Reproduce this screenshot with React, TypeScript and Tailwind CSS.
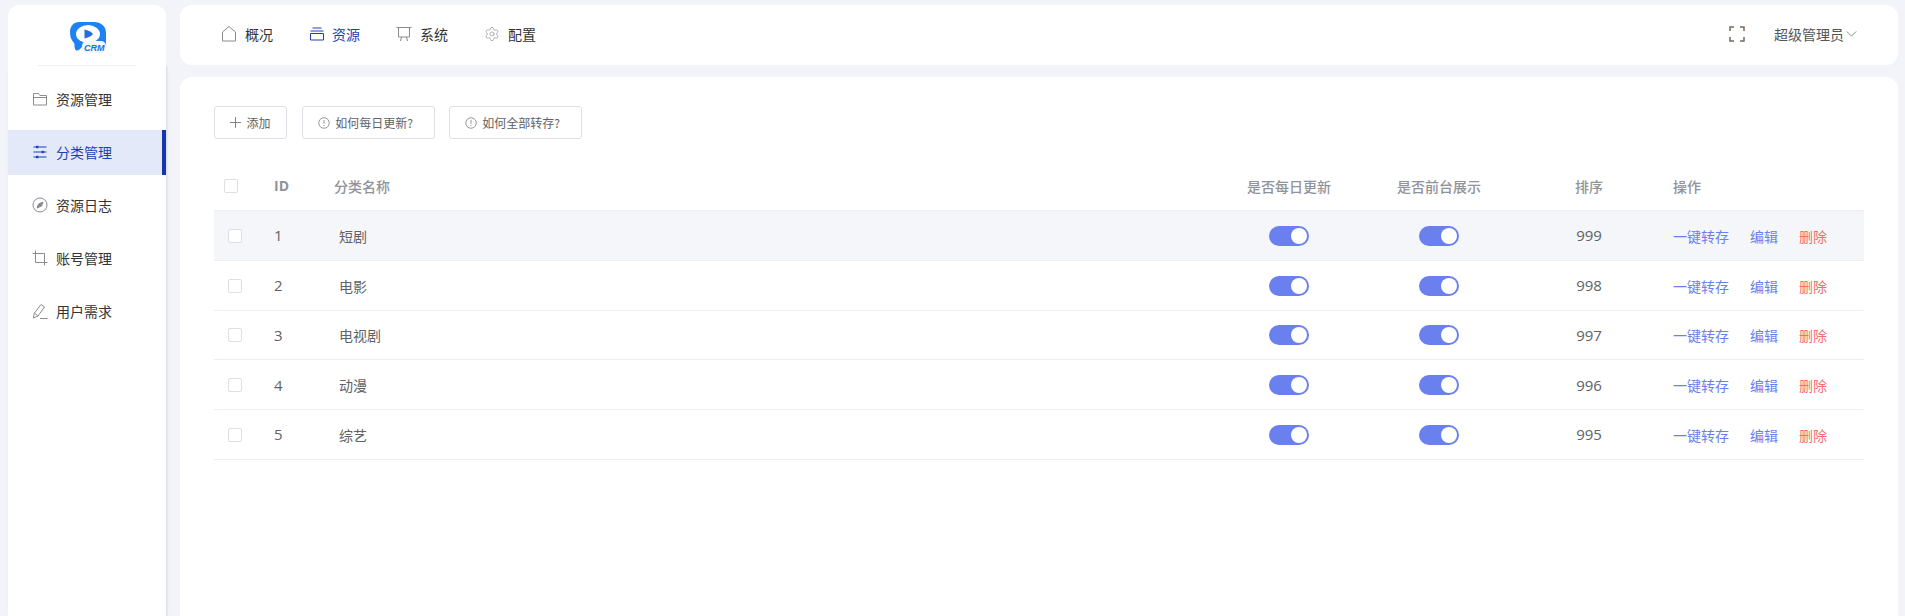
import type { ReactNode } from "react";
import { Settings } from "lucide-react";

const font = "font-['Noto_Sans_CJK_SC','Noto_Sans',sans-serif]";

function Icon({ children, className = "" }: { children: ReactNode; className?: string }) {
  return (
    <svg viewBox="0 0 16 16" fill="none" stroke="currentColor" strokeWidth="1" className={className}>
      {children}
    </svg>
  );
}

const sideItems: { label: string; icon: ReactNode; active?: boolean }[] = [
  { label: "资源管理", icon: <path d="M1.500 14V2.500h5l1.500 2h6.500V14zM1.500 6.500h13" /> },
  {
    label: "分类管理",
    active: true,
    icon: (
      <>
        <path d="M1.500 3h13M1.500 8h13M1.500 13h13" strokeWidth="1.100" />
        <rect x="4" y="1.800" width="2.400" height="2.400" fill="currentColor" stroke="none" />
        <rect x="9.500" y="6.800" width="2.400" height="2.400" fill="currentColor" stroke="none" />
        <rect x="4" y="11.800" width="2.400" height="2.400" fill="currentColor" stroke="none" />
      </>
    ),
  },
  {
    label: "资源日志",
    icon: (
      <>
        <circle cx="8" cy="8" r="7" />
        <path d="M5 11l1.500-4L11 5 9.500 9z" fill="currentColor" />
      </>
    ),
  },
  { label: "账号管理", icon: <path d="M3.500 0.500v12h12M.5 3.500h12v12" /> },
  { label: "用户需求", icon: <path d="M1.500 15l.6-4.500L9 1.500l3.500 2.500-6.500 9zM2.500 10l3.500 3M8 15.500h7.500" /> },
];

const rows = [
  { id: 1, name: "短剧", sort: 999 },
  { id: 2, name: "电影", sort: 998 },
  { id: 3, name: "电视剧", sort: 997 },
  { id: 4, name: "动漫", sort: 996 },
  { id: 5, name: "综艺", sort: 995 },
];

const gridCols = "grid grid-cols-[60px_60px_1fr_150px_150px_150px_200px] items-center";

function Logo() {
  return (
    <svg viewBox="0 0 36 32" className="h-8 w-9">
      <path
        d="M9 1h15c7 0 12 4 12 11v12H14l-4 4c-2 2-4 2-5 0-1-3 0-4-1-6C1 19 0 15 0 11 0 5 4 1 9 1z"
        fill="#1f82f2"
      />
      <ellipse cx="18" cy="13" rx="12" ry="9" fill="#fff" />
      <path d="M14.500 8.500v9c3.500-.5 7-2.500 8.500-4.500-1.500-2-5-4-8.500-4.500z" fill="#1c6fe0" />
      <rect x="12" y="20" width="24" height="12" rx="5" fill="#f2f6fd" />
      <text x="14" y="29.500" fontSize="9" fontWeight="800" fontStyle="italic" fill="#1c6fe0" fontFamily="'Liberation Sans',sans-serif">
        CRM
      </text>
    </svg>
  );
}

function Toggle() {
  return (
    <div className="mx-auto flex h-5 w-10 items-center justify-end rounded-full bg-[#6a80ee] pr-0.5">
      <div className="size-4 rounded-full bg-white" />
    </div>
  );
}

function Check() {
  return <div className="size-[14px] rounded-[2px] border border-[#dcdfe6] bg-white" />;
}

function ToolButton({ children, className }: { children: ReactNode; className: string }) {
  return (
    <button className={`flex h-[33px] items-center justify-center gap-[5px] rounded-[3px] border border-[#dcdfe6] bg-white text-xs text-[#606266] ${className}`}>
      {children}
    </button>
  );
}

function Info() {
  return (
    <Icon className="size-3 text-[#777]">
      <circle cx="8" cy="8" r="7" />
      <path d="M8 4v5M8 10.500v1.500" />
    </Icon>
  );
}

export default function App() {
  return (
    <div className={`flex h-[616px] gap-[14px] overflow-hidden bg-[#f3f4f9] pl-2 pr-[7px] pt-[5px] ${font}`}>
      <aside className="flex w-[158px] shrink-0 flex-col rounded-t-xl bg-white">
        <div className="relative z-10 rounded-t-xl bg-white px-[30px]">
          <div className="flex h-[61px] items-start justify-center border-b border-[#eeeeee] pl-[2px] pt-[16px]">
            <Logo />
          </div>
        </div>
        <nav className="flex flex-1 flex-col gap-2 pt-[11px] shadow-[1px_0_2px_rgba(0,0,0,0.12)]">
          {sideItems.map((item) => (
            <div
              key={item.label}
              className={`flex h-[45px] items-center gap-[8px] pb-[2px] pl-[24px] text-sm ${
                item.active ? "border-r-4 border-[#1438b0] bg-[#e3e9f9] text-[#1c3fb7]" : "text-[#333]"
              }`}
            >
              <Icon className={`size-4 ${item.active ? "text-[#1c3fb7]" : "text-[#8a8a94]"}`}>{item.icon}</Icon>
              {item.label}
            </div>
          ))}
        </nav>
      </aside>

      <div className="flex min-w-0 flex-1 flex-col gap-3">
        <header className="flex h-[60px] shrink-0 items-center rounded-xl bg-white pb-[2px] pl-[41px] pr-[41px] text-sm text-[#333]">
          <div className="flex items-center gap-[8px]">
            <Icon className="size-4 text-[#8a8a94]">
              <path d="M1.500 15V6L8 .5 14.500 6v9z" />
            </Icon>
            概况
          </div>
          <div className="ml-[36px] flex items-center gap-[7px] text-[#1c3fb7]">
            <Icon className="size-[16px]">
              <path d="M3.500 2h9M1.500 5h13M1.500 7.500h13v6.500h-13z" />
            </Icon>
            资源
          </div>
          <div className="ml-[36px] flex items-center gap-[8px]">
            <Icon className="size-4 text-[#8a8a94]">
              <path d="M.5 1.500h15M2.500 1.500v9.500h11V1.500M5.500 11l-1 4M10.500 11l1 4" />
            </Icon>
            系统
          </div>
          <div className="ml-[36px] flex items-center gap-[8px]">
            <Settings size={16} strokeWidth={1} className="text-[#8a8a94]" />
            配置
          </div>
          <Icon className="ml-auto size-4 text-[#7a6a5a]">
            <path d="M1 5V1h4M11 1h4v4M15 11v4h-4M5 15H1v-4" strokeWidth="1.500" />
          </Icon>
          <div className="ml-[29px] text-[#555]">超级管理员</div>
          <svg viewBox="0 0 12 7" fill="none" stroke="#777" className="ml-[2px] h-[6px] w-[11px]">
            <path d="M.5.500L6 6 11.500.500" />
          </svg>
        </header>

        <main className="flex-1 rounded-t-xl bg-white px-[34px] pt-[29px]">
          <div className="flex">
            <ToolButton className="w-[73px]">
              <svg viewBox="0 0 12 12" stroke="#777" className="size-[11px]">
                <path d="M6 0v12M0 6h12" />
              </svg>
              添加
            </ToolButton>
            <ToolButton className="ml-[15px] w-[133px] pr-[6px]">
              <Info />
              如何每日更新?
            </ToolButton>
            <ToolButton className="ml-[14px] w-[133px] pr-[6px]">
              <Info />
              如何全部转存?
            </ToolButton>
          </div>

          <div className={`${gridCols} mt-[25px] h-[47px] border-b border-[#ebeef5] pb-[2px] text-sm font-medium text-[#909399]`}>
            <div className="pl-[10px]">
              <Check />
            </div>
            <div className="font-['Open_Sans',sans-serif] font-bold">ID</div>
            <div>分类名称</div>
            <div className="text-center">是否每日更新</div>
            <div className="text-center">是否前台展示</div>
            <div className="text-center">排序</div>
            <div className="pl-[9px]">操作</div>
          </div>

          {rows.map((row, i) => (
            <div
              key={row.id}
              className={`${gridCols} h-[49.8px] border-b border-[#ebeef5] pt-[1px] text-sm text-[#606266] ${i === 0 ? "bg-[#f5f6fa]" : ""}`}
            >
              <div className="pl-[14px]">
                <Check />
              </div>
              <div className="font-['Open_Sans',sans-serif] text-[15px]">{row.id}</div>
              <div className="pl-[5px]">{row.name}</div>
              <div>
                <Toggle />
              </div>
              <div>
                <Toggle />
              </div>
              <div className="text-center font-['Open_Sans',sans-serif] text-[15px]">{row.sort}</div>
              <div className="flex gap-[21px] pl-[9px] text-[#6a80ee]">
                <span>一键转存</span>
                <span>编辑</span>
                <span className="text-[#f56c6c]">删除</span>
              </div>
            </div>
          ))}
        </main>
      </div>
    </div>
  );
}
